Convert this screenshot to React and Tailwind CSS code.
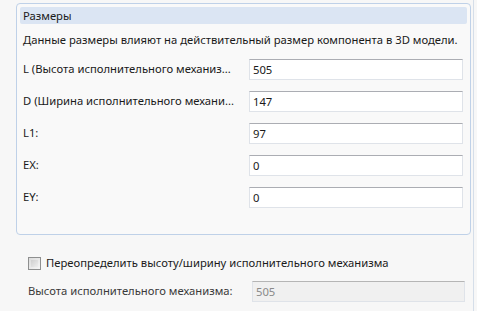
const rows = [
  { label: 'L (Высота исполнительного механиз...', value: '505' },
  { label: 'D (Ширина исполнительного механи...', value: '147' },
  { label: 'L1:', value: '97' },
  { label: 'EX:', value: '0' },
  { label: 'EY:', value: '0' },
]

function Field({ value, disabled }) {
  return (
    <div
      className={`h-[21px] border border-[#dfe3e9] border-t-[#abadb3] pl-[3px] leading-[19px] ${
        disabled ? 'bg-[#f0f0f0] text-[#8a8a8a] border-[#c9c9c9] border-t-[#b5b5b5]' : 'bg-white'
      }`}
    >
      {value}
    </div>
  )
}

export default function App() {
  return (
    <div className="w-[477px] h-[311px] bg-[#f7f7f7] text-[11.25px] text-[#1a1a1a] font-['Segoe_UI','Noto_Sans',sans-serif] overflow-hidden">
      <div className="w-[474px] h-full border-r border-[#d5dee9] pt-[3px] pl-[16px]">
        {/* Размеры */}
        <div className="w-[455px] h-[232px] border border-[#bfd1e8] rounded-[4px] bg-[#f9f9f9] p-[3px]">
          <div className="h-[17px] bg-[#dbe5f3] rounded-[2px] pl-[3px] leading-[17px]">Размеры</div>
          <div className="mt-[8px] pl-[3px] leading-[16px] whitespace-nowrap">
            Данные размеры влияют на действительный размер компонента в 3D модели.
          </div>
          <div className="mt-[11px] flex flex-col gap-[11px]">
            {rows.map((r) => (
              <div key={r.label} className="flex items-center">
                <div className="w-[229px] pl-[3px] whitespace-nowrap">{r.label}</div>
                <div className="w-[214px]">
                  <Field value={r.value} />
                </div>
              </div>
            ))}
          </div>
        </div>

        {/* Переопределить */}
        <div className="mt-[20px] pl-[12px] flex items-center gap-[5px]">
          <div className="w-[13px] h-[13px] border border-[#8e8f8f] bg-gradient-to-br from-[#dcdcdc] to-[#f6f6f6] p-[2px]">
            <div className="w-full h-full bg-gradient-to-br from-[#cfcfcf] to-[#eeeeee]" />
          </div>
          <span className="whitespace-nowrap">Переопределить высоту/ширину исполнительного механизма</span>
        </div>
        <div className="mt-[9px] flex items-center">
          <div className="w-[236px] pl-[12px] text-[#3a3a3a] whitespace-nowrap">Высота исполнительного механизма:</div>
          <div className="w-[213px]">
            <Field value="505" disabled />
          </div>
        </div>
      </div>
    </div>
  )
}
